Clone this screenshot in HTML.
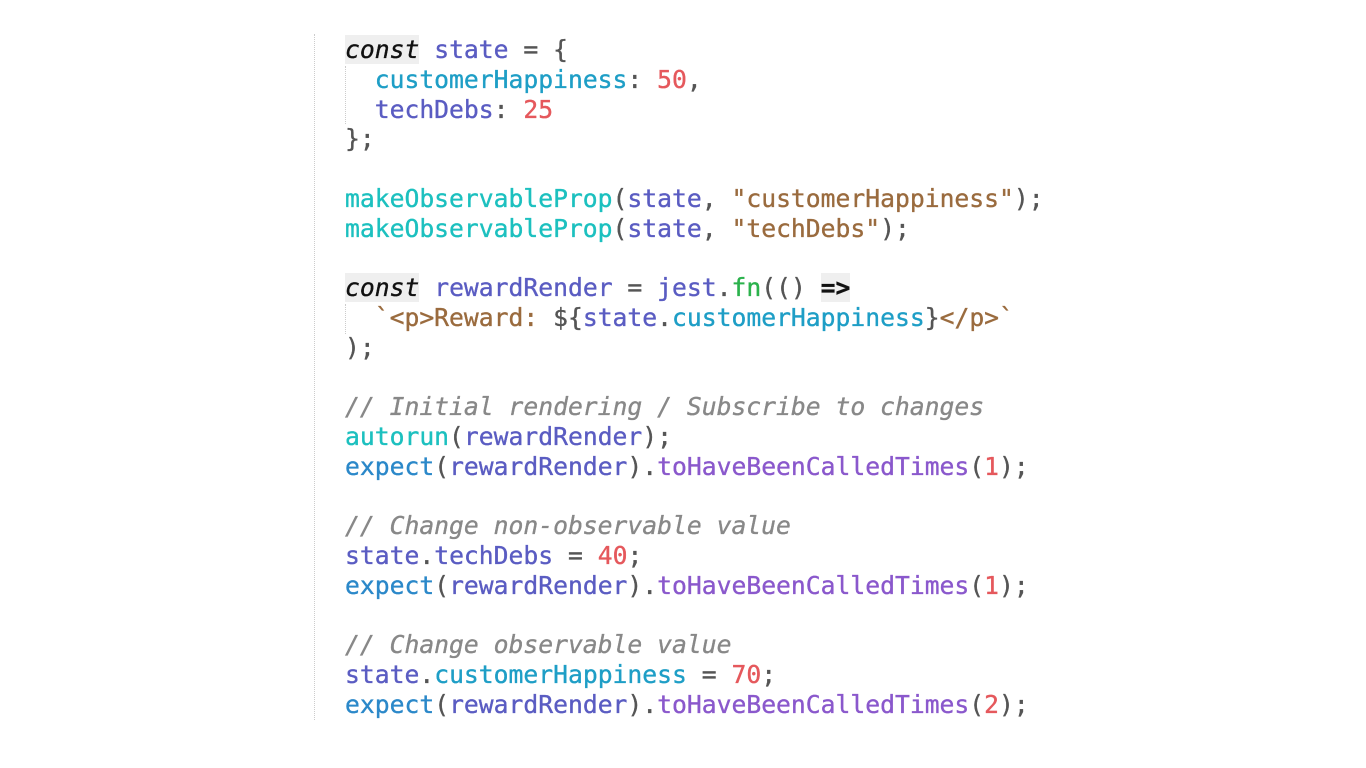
<!DOCTYPE html>
<html><head><meta charset="utf-8"><style>
html,body{margin:0;padding:0;background:#fff;width:1366px;height:768px;overflow:hidden}
.gut{position:absolute;left:314px;top:34px;height:686px;border-left:1px dotted #ccc}
.ig{position:absolute;left:345px;border-left:1px dotted #ccc}
pre{position:absolute;left:345px;top:35px;margin:0;font-family:"DejaVu Sans Mono","Liberation Mono",monospace;font-size:24.7px;line-height:29.77px;color:#555;-webkit-text-stroke:0.35px currentColor}
.k{color:#111;font-style:italic;background:#efefef}
.ar{color:#111;font-weight:bold;background:#efefef}
.v{color:#5a5cc2}
.p{color:#1e9ec6}
.n{color:#e5585c}
.s{color:#9a6b3e}
.f{color:#1cc0bf}
.g{color:#2bb24c}
.e{color:#2b88c9}
.m{color:#8a58cc}
.c{color:#888;font-style:italic}
</style></head><body>
<div class="gut"></div>
<div class="ig" style="top:66px;height:58px"></div>
<div class="ig" style="top:304px;height:30px"></div>
<pre><span class="k">const</span> <span class="v">state</span> = {
  <span class="p">customerHappiness</span>: <span class="n">50</span>,
  <span class="v">techDebs</span>: <span class="n">25</span>
};

<span class="f">makeObservableProp</span>(<span class="v">state</span>, <span class="s">"customerHappiness"</span>);
<span class="f">makeObservableProp</span>(<span class="v">state</span>, <span class="s">"techDebs"</span>);

<span class="k">const</span> <span class="v">rewardRender</span> = <span class="v">jest</span>.<span class="g">fn</span>(() <span class="ar">=&gt;</span>
  <span class="s">`&lt;p&gt;Reward: </span>${<span class="v">state</span>.<span class="p">customerHappiness</span>}<span class="s">&lt;/p&gt;`</span>
);

<span class="c">// Initial rendering / Subscribe to changes</span>
<span class="f">autorun</span>(<span class="v">rewardRender</span>);
<span class="e">expect</span>(<span class="v">rewardRender</span>).<span class="m">toHaveBeenCalledTimes</span>(<span class="n">1</span>);

<span class="c">// Change non-observable value</span>
<span class="v">state</span>.<span class="v">techDebs</span> = <span class="n">40</span>;
<span class="e">expect</span>(<span class="v">rewardRender</span>).<span class="m">toHaveBeenCalledTimes</span>(<span class="n">1</span>);

<span class="c">// Change observable value</span>
<span class="v">state</span>.<span class="p">customerHappiness</span> = <span class="n">70</span>;
<span class="e">expect</span>(<span class="v">rewardRender</span>).<span class="m">toHaveBeenCalledTimes</span>(<span class="n">2</span>);</pre>
</body></html>
